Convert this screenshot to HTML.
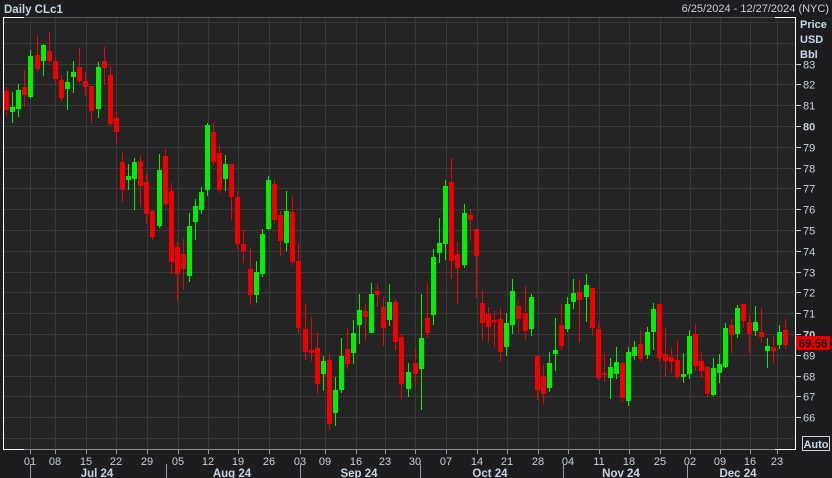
<!DOCTYPE html>
<html><head><meta charset="utf-8">
<style>
html,body{margin:0;padding:0;background:#1d1d1f;width:832px;height:478px;overflow:hidden;font-family:"Liberation Sans",Tahoma,sans-serif;}
svg{position:absolute;left:0;top:0}
</style></head>
<body>
<svg id="s" width="832" height="478" xmlns="http://www.w3.org/2000/svg" font-family="Liberation Sans, sans-serif">
<rect x="0" y="0" width="832" height="478" fill="#1d1d1f"/>
<rect x="3" y="17" width="793" height="432" fill="#232423"/>
<g id="grid"></g>
<g id="candles"></g>
<text x="4" y="13" font-size="11.5" font-weight="bold" fill="#c9d5e2">Daily CLc1</text>
<text x="829" y="12" font-size="11" fill="#c9d1d9" text-anchor="end">6/25/2024 - 12/27/2024 (NYC)</text>
<text x="800" y="28" font-size="11" font-weight="bold" fill="#c9d9ea">Price</text>
<text x="800" y="43" font-size="11" font-weight="bold" fill="#c9d9ea">USD</text>
<text x="800" y="58" font-size="11" font-weight="bold" fill="#c9d9ea">Bbl</text>
<g id="axis"></g>
<g id="top">
<rect x="796" y="336" width="34" height="14" fill="#e80000"/>
<text x="813" y="347.5" font-size="11.5" font-weight="bold" fill="#111" text-anchor="middle">69.56</text>
<rect x="802.5" y="436.5" width="27" height="14" fill="none" stroke="#c9d1d9"/>
<text x="816" y="448" font-size="11" font-weight="bold" fill="#c9d9ea" text-anchor="middle">Auto</text>
</g>
</svg>
<script>
var NS="http://www.w3.org/2000/svg";
function el(p,t,a,txt){var e=document.createElementNS(NS,t);for(var k in a)e.setAttribute(k,a[k]);if(txt)e.textContent=txt;document.getElementById(p).appendChild(e);return e;}
function Y(p){return 126+(80-p)*20.8;}
for(var p=65;p<=85;p++){var y=Math.round(Y(p))+0.5;if(y>17&&y<449)el("grid","line",{x1:3,x2:796,y1:y,y2:y,stroke:"#383a39","stroke-width":1});}
var ticks=[[30,"01"],[55,"08"],[86,"15"],[116,"22"],[147,"29"],[178,"05"],[208,"12"],[238,"19"],[269,"26"],[300,"03"],[325,"09"],[356,"16"],[385,"23"],[415,"30"],[446,"07"],[477,"14"],[507,"21"],[538,"28"],[568,"04"],[599,"11"],[629,"18"],[660,"25"],[690,"02"],[720,"09"],[750,"16"],[777,"23"]];
ticks.forEach(function(t){var x=t[0]+0.5;el("grid","line",{x1:x,x2:x,y1:17,y2:449,stroke:"#383a39"});
el("axis","line",{x1:x,x2:x,y1:450,y2:454,stroke:"#9aa0a6"});
el("axis","text",{x:t[0],y:465,"font-size":11,fill:"#c9d1d9","text-anchor":"middle"},t[1]);});
el("axis","line",{x1:3,x2:796,y1:17.5,y2:17.5,stroke:"#5a5c5b"});
el("axis","line",{x1:3,x2:796,y1:449.5,y2:449.5,stroke:"#8a8c8b"});
el("axis","line",{x1:3.5,x2:3.5,y1:17,y2:450,stroke:"#ffffff"});
el("axis","line",{x1:3,x2:24,y1:17.5,y2:17.5,stroke:"#ffffff"});
el("axis","line",{x1:3,x2:24,y1:449.5,y2:449.5,stroke:"#ffffff"});
el("axis","line",{x1:775,x2:796,y1:17.5,y2:17.5,stroke:"#ffffff"});
el("axis","line",{x1:775,x2:796,y1:449.5,y2:449.5,stroke:"#ffffff"});
el("axis","line",{x1:795.5,x2:795.5,y1:17,y2:450,stroke:"#ffffff"});
for(var p=66;p<=83;p++){var y=Math.round(Y(p));el("axis","line",{x1:796,x2:801,y1:y+0.5,y2:y+0.5,stroke:"#c9d1d9"});
el("axis","text",{x:803,y:y+4.5,"font-size":11,fill:"#c9d1d9","font-weight":(p%10==0?"bold":"normal")},String(p));}
[30,166,300,420,563,687].forEach(function(x){el("axis","line",{x1:x+0.5,x2:x+0.5,y1:464,y2:478,stroke:"#9aa0a6"});});
[[97,"Jul 24"],[232,"Aug 24"],[359,"Sep 24"],[490,"Oct 24"],[621,"Nov 24"],[738,"Dec 24"]].forEach(function(m){
el("axis","text",{x:m[0],y:477,"font-size":11.5,"font-weight":"bold",fill:"#c9d5e2","text-anchor":"middle"},m[1]);});
var C=[
[6,91,110,87,116,"r"],[12,107,112,92,123,"g"],[18,90,109,84,117,"g"],[24,87,95,70,107,"r"],[30,56,97,50,99,"g"],
[37,55,69,35,71,"r"],[43,45,61,44,76,"g"],[49,51,61,32,63,"r"],[55,61,79,57,84,"r"],[61,80,98,75,101,"r"],
[67,82,89,71,110,"g"],[73,72,77,61,93,"g"],[79,67,81,48,83,"r"],[85,81,87,72,96,"r"],[91,86,111,86,123,"r"],
[98,67,109,62,118,"g"],[104,61,68,47,85,"r"],[110,75,124,66,126,"r"],[116,118,132,112,144,"r"],
[122,162,190,153,202,"r"],[128,176,180,164,190,"g"],[134,162,179,158,210,"g"],[140,161,186,155,207,"r"],
[146,182,214,174,224,"r"],[152,211,237,210,240,"r"],[159,170,226,154,228,"g"],[165,156,204,149,206,"r"],
[171,191,262,183,274,"r"],[177,247,274,242,301,"r"],[183,254,269,239,290,"r"],[189,226,276,213,282,"g"],
[195,206,222,199,240,"g"],[201,192,210,187,214,"g"],[207,125,190,123,196,"g"],[213,132,162,123,165,"r"],
[219,153,190,145,193,"r"],[225,164,179,155,191,"g"],[231,164,197,164,220,"r"],[237,197,244,191,249,"r"],
[243,244,251,230,263,"r"],[250,269,295,248,305,"r"],[256,272,295,261,303,"g"],[262,234,274,229,277,"g"],
[268,180,229,176,230,"g"],[274,184,220,179,223,"r"],[280,215,241,211,256,"r"],[286,211,243,191,251,"g"],
[292,212,262,197,265,"r"],[298,261,328,243,333,"r"],[305,329,352,304,360,"r"],[311,350,353,317,361,"r"],
[317,348,384,332,394,"r"],[323,361,374,356,391,"g"],[329,360,424,354,430,"r"],[335,390,413,377,426,"g"],
[341,356,390,338,393,"g"],[347,349,364,328,369,"r"],[353,333,353,320,364,"g"],[359,310,325,294,344,"g"],
[365,311,317,304,341,"r"],[371,294,333,283,333,"g"],[377,291,295,284,307,"r"],[383,307,328,297,346,"r"],
[389,302,320,284,326,"g"],[395,302,342,299,350,"r"],[401,337,384,334,399,"r"],[408,372,389,363,397,"g"],
[415,363,374,349,386,"r"],[421,338,369,294,410,"g"],[427,318,333,283,338,"r"],[433,257,315,249,325,"g"],
[439,243,253,218,263,"g"],[445,186,244,180,260,"g"],[451,182,261,158,279,"r"],[457,254,268,242,304,"r"],
[464,213,265,204,268,"g"],[470,215,220,209,241,"r"],[476,229,256,229,298,"r"],[482,303,323,290,341,"r"],
[488,314,327,307,343,"r"],[494,320,321,311,347,"r"],[500,319,352,308,362,"r"],[506,323,347,313,356,"g"],
[512,291,325,279,334,"g"],[518,306,319,299,333,"r"],[525,313,331,286,340,"r"],[531,297,329,294,336,"g"],
[537,356,390,355,400,"r"],[543,376,394,365,404,"r"],[549,363,388,352,392,"g"],[555,350,354,318,371,"g"],
[561,325,346,304,350,"r"],[567,304,329,297,332,"g"],[573,293,302,279,309,"g"],[579,292,300,280,342,"r"],
[586,285,297,274,322,"g"],[592,288,328,288,336,"r"],[598,329,378,323,380,"r"],[604,373,375,353,382,"r"],
[610,367,378,358,399,"g"],[616,362,374,347,379,"g"],[622,363,398,362,402,"r"],[628,352,401,347,406,"g"],
[634,347,356,341,360,"g"],[640,344,359,331,361,"r"],[647,332,355,327,359,"g"],[653,309,332,303,350,"g"],
[659,304,358,304,362,"r"],[665,354,361,328,376,"r"],[671,357,362,348,373,"r"],[677,360,377,341,380,"r"],
[683,374,377,353,383,"g"],[689,336,374,330,379,"g"],[695,334,366,324,370,"r"],[701,361,371,352,378,"r"],
[707,367,394,366,397,"r"],[713,368,395,358,396,"g"],[719,364,373,354,383,"g"],[725,328,367,323,368,"g"],
[731,325,335,319,353,"r"],[737,308,334,305,338,"g"],[743,304,321,304,328,"r"],[749,322,334,315,353,"r"],
[755,322,331,306,336,"g"],[761,332,337,308,342,"r"],[767,346,351,338,368,"g"],[773,347,351,336,364,"r"],
[779,332,345,325,349,"g"],[785,330,345,319,349,"r"]];
C.forEach(function(c){var col=c[5]=="g"?"#00f000":"#f00000";
el("candles","rect",{x:c[0],y:c[3],width:1,height:c[4]-c[3],fill:col});
el("candles","rect",{x:c[0]-2,y:c[1],width:5,height:Math.max(2,c[2]-c[1]),fill:col});});
var s=document.getElementById("s");s.appendChild(document.getElementById("top"));
</script>
</body></html>
